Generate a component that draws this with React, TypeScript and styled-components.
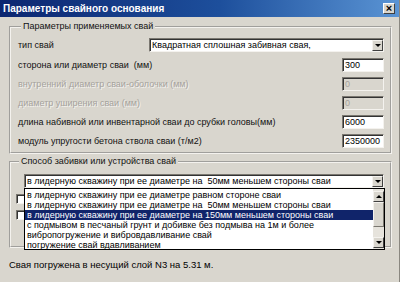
import { createGlobalStyle, styled } from 'styled-components';

const GlobalStyle = createGlobalStyle`
	html, body {
		margin: 0;
		padding: 0;
		background: #d9d6ce;
	}
`;

const pileTypes = 'Квадратная сплошная забивная свая,';

const params = [
	{ label: 'сторона или диаметр сваи  (мм)', value: '300', disabled: false },
	{ label: 'внутренний диаметр сваи-оболочки (мм)', value: '0', disabled: true },
	{ label: 'диаметр уширения сваи (мм)', value: '0', disabled: true },
	{ label: 'длина набивной или инвентарной сваи до срубки головы(мм)', value: '6000', disabled: false },
	{ label: 'модуль упругости бетона ствола сваи (т/м2)', value: '2350000', disabled: false },
];

const methods = [
	'в лидерную скважину при ее диаметре равном стороне сваи',
	'в лидерную скважину при ее диаметре на  50мм меньшем стороны сваи',
	'в лидерную скважину при ее диаметре на 150мм меньшем стороны сваи',
	'с подмывом в песчаный грунт и добивке без подмыва на 1м и более',
	'вибропогружение и вибровдавливание свай',
	'погружение свай вдавливанием',
];

const Window = styled.div`
	width: 400px;
	height: 282px;
	box-sizing: border-box;
	display: flex;
	flex-direction: column;
	background: #d9d6ce;
	border-right: 1px solid #8a8780;
	font-family: 'Liberation Sans', Arial, sans-serif;
	font-size: 9px;
	color: #111;
`;

const TitleBar = styled.div`
	height: 17px;
	flex-shrink: 0;
	display: flex;
	align-items: center;
	justify-content: space-between;
	padding: 0 4px 0 3px;
	background: linear-gradient(to right, #0c2670 0%, #1d4f9c 55%, #5a94d4 100%);
	color: white;
	font-weight: bold;
	font-size: 10px;
`;

const CloseButton = styled.div`
	width: 12px;
	height: 11px;
	box-sizing: border-box;
	display: flex;
	align-items: center;
	justify-content: center;
	background: #d9d6ce;
	border: 1px solid;
	border-color: #fff #404040 #404040 #fff;
	color: #000;
	font-size: 11px;
	font-weight: bold;
	line-height: 1;
`;

const Body = styled.div`
	flex: 1;
	display: flex;
	flex-direction: column;
	padding: 4px 7px 0 9px;
`;

const Group = styled.fieldset<{ $pad: string }>`
	margin: 0;
	padding: ${(p) => p.$pad};
	border: 2px groove #f4f2ee;
	min-width: 0;
	& + & {
		margin-top: 2px;
	}
`;

const Legend = styled.legend`
	padding: 0 2px;
	margin-left: 3px;
	line-height: 11px;
`;

const Rows = styled.div`
	display: flex;
	flex-direction: column;
	gap: 5px;
`;

const Row = styled.div<{ $first?: boolean }>`
	display: flex;
	align-items: center;
	justify-content: space-between;
	height: 14px;
	margin-bottom: ${(p) => (p.$first ? '1px' : '0')};
`;

const Label = styled.span<{ $disabled?: boolean }>`
	white-space: pre;
	color: ${(p) => (p.$disabled ? '#a5a29c' : '#111')};
	text-shadow: ${(p) => (p.$disabled ? '1px 1px 0 #f4f2ee' : 'none')};
`;

const Field = styled.div<{ $width: number; $disabled?: boolean }>`
	width: ${(p) => p.$width}px;
	height: 14px;
	box-sizing: border-box;
	display: flex;
	align-items: center;
	padding-left: 2px;
	background: ${(p) => (p.$disabled ? '#d9d6ce' : '#fff')};
	color: ${(p) => (p.$disabled ? '#a5a29c' : '#000')};
	border: 1px solid;
	border-color: #7a7770 #f4f2ee #f4f2ee #7a7770;
	box-shadow: inset 1px 1px 0 #333;
	white-space: pre;
	overflow: hidden;
	position: relative;
`;

const ArrowButton = styled.div<{ $up?: boolean }>`
	width: 11px;
	height: 11px;
	box-sizing: border-box;
	flex-shrink: 0;
	display: flex;
	align-items: center;
	justify-content: center;
	background: #d9d6ce;
	border: 1px solid;
	border-color: #f4f2ee #404040 #404040 #f4f2ee;
	&::after {
		content: '';
		border-left: 3px solid transparent;
		border-right: 3px solid transparent;
		${(p) => (p.$up ? 'border-bottom' : 'border-top')}: 3px solid #000;
	}
`;

const ComboText = styled.span`
	flex: 1;
	overflow: hidden;
	white-space: pre;
`;

const ComboWrap = styled.div`
	position: relative;
	margin-left: 8px;
	width: 360px;
`;

const DropList = styled.div`
	position: absolute;
	top: 14px;
	left: 0;
	width: 361px;
	height: 62px;
	box-sizing: border-box;
	display: flex;
	background: #fff;
	border: 1px solid #000;
	z-index: 2;
`;

const Items = styled.div`
	flex: 1;
	display: flex;
	flex-direction: column;
	padding-top: 1px;
`;

const Item = styled.div<{ $selected?: boolean }>`
	height: 10px;
	line-height: 10px;
	padding-left: 2px;
	white-space: pre;
	background: ${(p) => (p.$selected ? '#10246a' : 'transparent')};
	color: ${(p) => (p.$selected ? '#fff' : '#000')};
`;

const ScrollBar = styled.div`
	width: 11px;
	display: flex;
	flex-direction: column;
	background: #e6e3dc;
	padding-top: 2px;
	padding-bottom: 1px;
`;

const Thumb = styled.div`
	height: 25px;
	box-sizing: border-box;
	background: #d9d6ce;
	border: 1px solid;
	border-color: #f4f2ee #7a7770 #7a7770 #f4f2ee;
`;

const Track = styled.div`
	flex: 1;
`;

const CheckRow = styled.div`
	display: flex;
	align-items: center;
	height: 10px;
	margin-top: 6px;
`;

const CheckBox = styled.div`
	width: 10px;
	height: 10px;
	box-sizing: border-box;
	background: #fff;
	border: 1px solid;
	border-color: #7a7770 #f4f2ee #f4f2ee #7a7770;
	box-shadow: inset 1px 1px 0 #333;
`;

const Status = styled.div`
	margin-top: 11px;
	font-size: 9.5px;
	color: #000;
`;

const App = () => {
	return (
		<Window>
			<GlobalStyle />
			<TitleBar>
				<span>Параметры свайного основания</span>
				<CloseButton>×</CloseButton>
			</TitleBar>
			<Body>
				<Group $pad='6px 6px 4px 7px'>
					<Legend>Параметры применяемых свай</Legend>
					<Rows>
						<Row $first>
							<Label>тип свай</Label>
							<Field $width={235}>
								<ComboText>{pileTypes}</ComboText>
								<ArrowButton />
							</Field>
						</Row>
						{params.map((p) => (
							<Row key={p.label}>
								<Label $disabled={p.disabled}>{p.label}</Label>
								<Field $width={42} $disabled={p.disabled}>
									{p.value}
								</Field>
							</Row>
						))}
					</Rows>
				</Group>
				<Group $pad='7px 6px 26px 5px'>
					<Legend>Способ забивки или устройства свай</Legend>
					<ComboWrap>
						<Field $width={360}>
							<ComboText>{methods[1]}</ComboText>
							<ArrowButton />
						</Field>
						<DropList>
							<Items>
								{methods.map((m, i) => (
									<Item key={m} $selected={i === 2}>
										{m}
									</Item>
								))}
							</Items>
							<ScrollBar>
								<ArrowButton $up />
								<Thumb />
								<Track />
								<ArrowButton />
							</ScrollBar>
						</DropList>
					</ComboWrap>
					<CheckRow>
						<CheckBox />
					</CheckRow>
					<CheckRow>
						<CheckBox />
					</CheckRow>
				</Group>
				<Status>Свая погружена в несущий слой N3 на 5.31 м.</Status>
			</Body>
		</Window>
	);
};

export default App;
